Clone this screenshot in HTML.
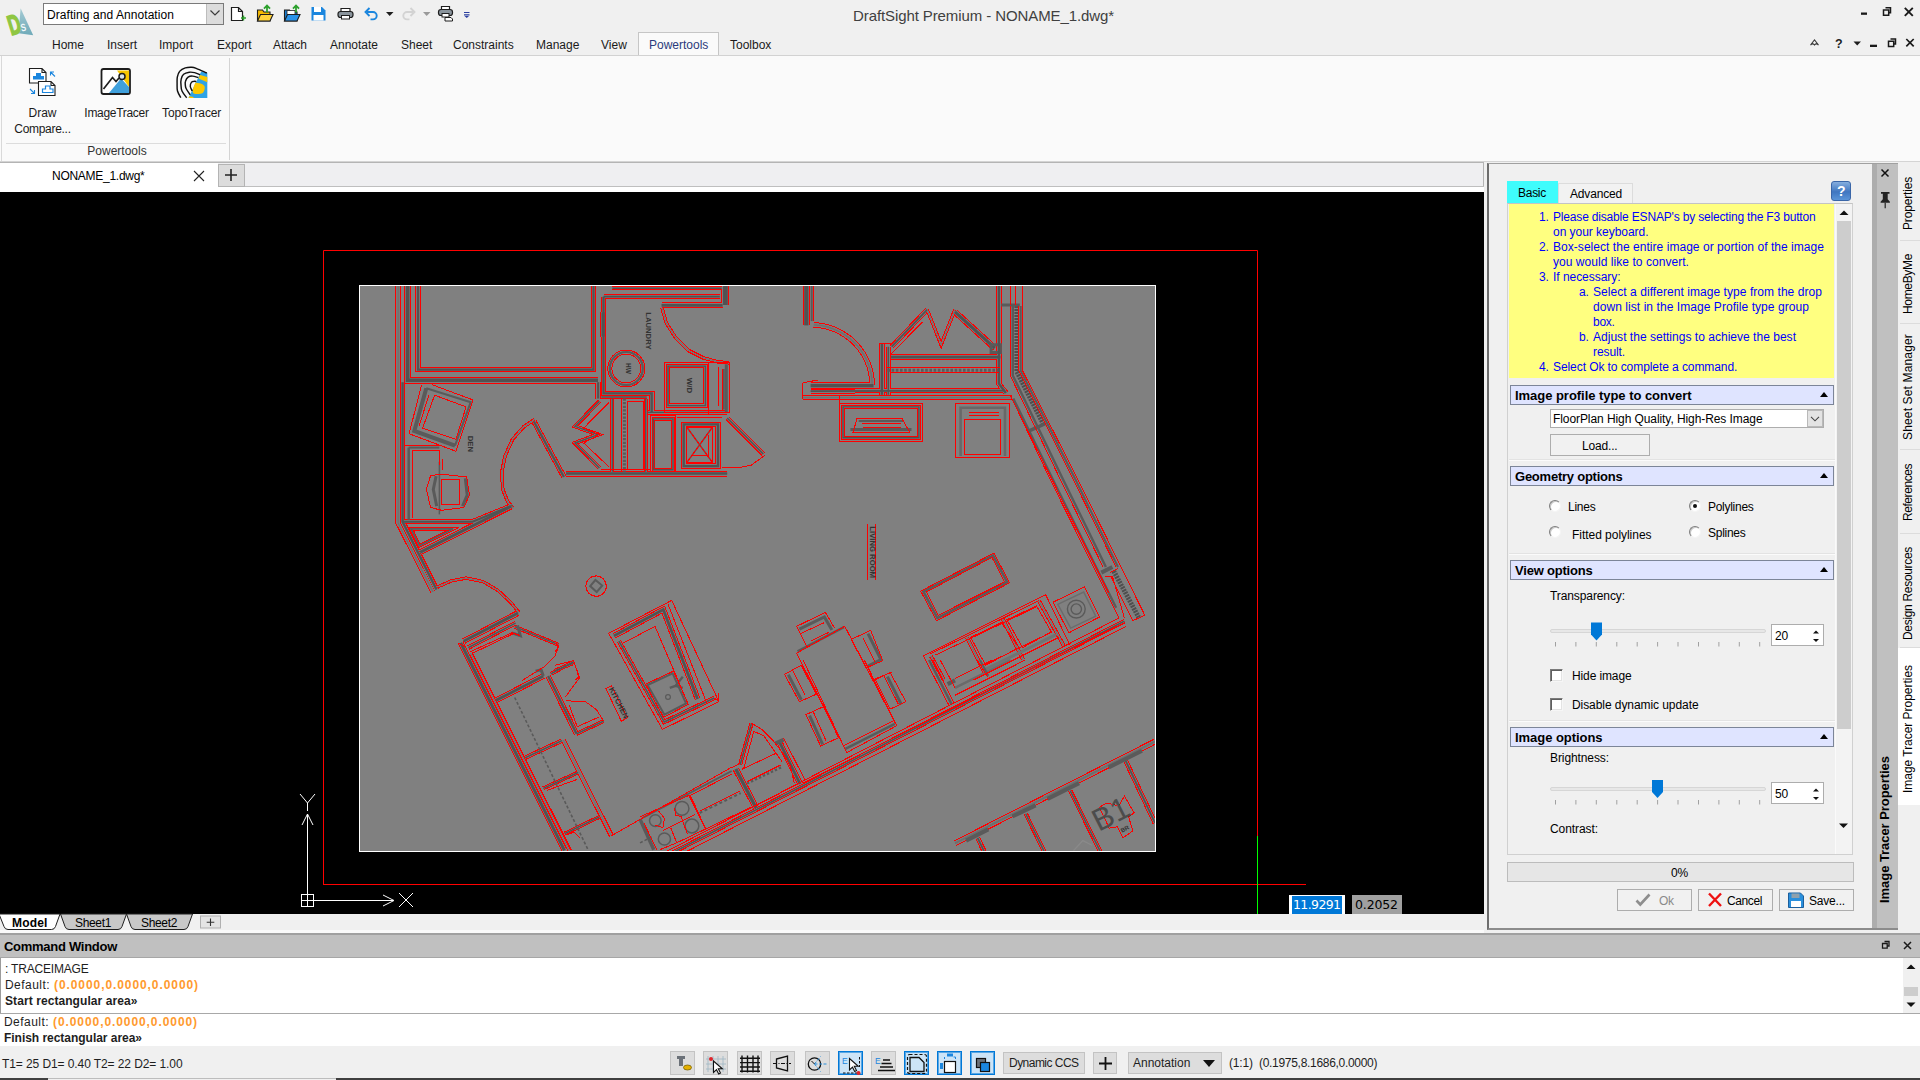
<!DOCTYPE html>
<html lang="en">
<head>
<meta charset="utf-8">
<title>DraftSight Premium - NONAME_1.dwg*</title>
<style>
*{box-sizing:border-box;margin:0;padding:0}
html,body{width:1920px;height:1080px;overflow:hidden;background:#f0f0f0}
body{position:relative;font-family:"Liberation Sans",sans-serif;font-size:12px;color:#000}
.a{position:absolute;white-space:nowrap}
.t{position:absolute;white-space:nowrap;line-height:14px;height:14px}
svg{position:absolute;overflow:visible}
/* ---------- title / quick access ---------- */
#wscombo{left:43px;top:3px;width:181px;height:22px;background:#fff;border:1px solid #7a7a7a}
#wscombo .btn{position:absolute;right:0;top:0;width:17px;height:20px;background:#dcdcdc;border-left:1px solid #bdbdbd}
#title{left:853px;top:7px;font-size:15px;line-height:18px;color:#404040}
.mtab{position:absolute;top:38px;height:14px;line-height:14px;font-size:12px;color:#1a1a1a;white-space:nowrap}
#ptab{left:638px;top:32px;width:81px;height:25px;background:#fafafa;border:1px solid #c6c6c6;border-bottom:none}
/* ---------- ribbon ---------- */
#ribbon{left:0;top:55px;width:1920px;height:107px;background:#fafafa;border-top:1px solid #d2d2d2;border-bottom:1px solid #d4d4d4}
#ribbon .lb{position:absolute;left:1px;top:0;width:1px;height:105px;background:#d9d9d9}
.rlab{position:absolute;font-size:12px;line-height:16px;text-align:center;color:#1a1a1a;white-space:nowrap}
/* ---------- doc tabs ---------- */
#doctabs{left:0;top:162px;width:1484px;height:30px;background:#efeff1;border-top:1px solid #b4b4b4;border-right:1px solid #b4b4b4}
#doctabs .line{position:absolute;left:0;top:23px;width:1484px;height:1px;background:#bfbfbf}
#doctabs .white{position:absolute;left:0;top:24px;width:1484px;height:5px;background:#fff}
#doctab{position:absolute;left:0;top:0;width:218px;height:29px;background:#fff}
#plusbtn{position:absolute;left:218px;top:1px;width:27px;height:23px;background:#dcdcdc;border:1px solid #b4b4b4}
/* ---------- canvas ---------- */
#canvas{left:0;top:192px;width:1484px;height:722px;background:#000;overflow:hidden}
/* ---------- model tabs ---------- */
#mtabs{left:0;top:914px;width:1484px;height:19px;background:#f0f0f0}
/* ---------- command window ---------- */
#cmdhead{left:0;top:933px;width:1920px;height:25px;background:#c0c0c0;border-top:2px solid #a0a0a0;border-bottom:1px solid #a6a6a6}
#cmdlog{left:0;top:958px;width:1920px;height:55px;background:#fff;border-left:1px solid #9b9b9b}
#cmdsep{left:0;top:1013px;width:1920px;height:1px;background:#a8a8a8}
#cmdin{left:0;top:1014px;width:1920px;height:32px;background:#fff}
.cl{position:absolute;left:5px;font-size:12px;line-height:16px;white-space:nowrap;color:#1e1e1e}
.or{color:#ff9a2e;font-weight:bold}
/* ---------- status bar ---------- */
#status{left:0;top:1046px;width:1920px;height:32px;background:#f0f0f0}
.sb{position:absolute;top:5px;width:25px;height:24px;background:#dddddd;border:1px solid #c3c3c3}
.sb.on{background:#cce4f7;border:1px solid #0078d7;box-shadow:inset 0 0 0 1px #5aa7e4}
/* ---------- right dock ---------- */
#dock{left:1487px;top:163px;width:411px;height:767px;background:#f0f0f0;border-left:2px solid #6d6d6d;border-top:1px solid #a0a0a0;border-bottom:2px solid #8c8c8c}
#docktitle{left:1872px;top:164px;width:26px;height:764px;background:#c0c0c0;border-left:5px solid #adadad}
#sidetabs{left:1898px;top:163px;width:22px;height:770px;background:#f0f0f0}
.vt{position:absolute;transform-origin:0 0;transform:rotate(-90deg);white-space:nowrap;font-size:12px;line-height:14px;height:14px}
.hd{position:absolute;left:1510px;width:324px;height:20px;background:#dfe4ff;border:1px solid #7c8598}
.hd b{position:absolute;left:4px;top:2px;font-size:13px;line-height:15px;letter-spacing:-0.05px;white-space:nowrap}
.hd i{position:absolute;right:5.5px;top:6px;width:0;height:0;border-left:4.5px solid transparent;border-right:4.5px solid transparent;border-bottom:5px solid #000}
.sep{position:absolute;left:1509px;width:326px;height:1px;background:#fbfbfb;border-top:1px solid #e3e3e3;height:2px}
.pt{position:absolute;font-size:12px;line-height:14px;height:14px;white-space:nowrap;letter-spacing:-0.19px;color:#000}
.bl{color:#0000ff}
.radio{position:absolute;width:12px;height:12px;border-radius:50%;background:#fff;border:1.5px solid;border-color:#7d7d7d #f4f4f4 #f4f4f4 #7d7d7d;box-shadow:inset 1px 1px 0 #c9c9c9}
.chk{position:absolute;width:13px;height:13px;background:#fff;border:1px solid;border-color:#7a7a7a #f6f6f6 #f6f6f6 #7a7a7a;box-shadow:inset 1px 1px 0 #5f5f5f,inset -1px -1px 0 #e3e3e3}
.groove{position:absolute;height:4px;background:#e7e7e7;border:1px solid #d6d6d6;border-radius:2px}
.spin{position:absolute;width:53px;height:22px;background:#fff;border:1px solid #adadad}
.pbtn{position:absolute;width:75px;height:22px;background:#f1f1f1;border:1px solid #adadad}
</style>
</head>
<body>

<!-- ================= TITLE BAR ================= -->
<!-- logo -->
<svg class="a" style="left:0;top:0" width="44" height="44" viewBox="0 0 44 44">
  <defs><linearGradient id="lg1" x1="0" y1="0" x2="0" y2="1"><stop offset="0" stop-color="#a5cbd4"/><stop offset="1" stop-color="#6faab9"/></linearGradient></defs>
  <polygon points="20.6,8.3 33.2,35.2 18.6,33.2" fill="url(#lg1)"/>
  <text transform="translate(11.2,35.4) rotate(-17) scale(.6,1)" font-family="Liberation Sans, sans-serif" font-weight="bold" font-size="28" fill="#8fc642" stroke="#8fc642" stroke-width="1.6">D</text>
  <text transform="translate(21.6,31.6) rotate(-12) scale(.75,1)" font-family="Liberation Sans, sans-serif" font-weight="bold" font-size="10.5" fill="#f4fafb">S</text>
</svg>
<!-- workspace combo -->
<div id="wscombo" class="a"><span class="t" style="left:3px;top:4px;font-size:12px;letter-spacing:0.068px">Drafting and Annotation</span><div class="btn"><svg style="left:2px;top:5px" width="12" height="8" viewBox="0 0 12 8"><path d="M1.5 1.5 L6 6 L10.5 1.5" fill="none" stroke="#3c3c3c" stroke-width="1.2"/></svg></div></div>
<!-- quick access icons -->
<svg class="a" style="left:226px;top:0" width="250" height="28" viewBox="226 0 250 28">
  <!-- new -->
  <path d="M231.5 7.5 h7 l4 4 v9 h-11 z M238.5 7.5 v4 h4" fill="#fff" stroke="#1e1e1e" stroke-width="1.2"/>
  <path d="M243.5 15.5 v5 M241 18 h5" stroke="#2ca02c" stroke-width="1.4"/>
  <!-- open yellow -->
  <path d="M257.5 21 v-11 h5 l1.5 2 h6 v9 z" fill="#f6b900" stroke="#1e1e1e" stroke-width="1.1"/>
  <path d="M257.5 21 l3 -6.5 h12.5 l-3 6.5 z" fill="#ffd23a" stroke="#1e1e1e" stroke-width="1.1"/>
  <path d="M267 12.5 v-6 M264 8.7 l3 -3.2 l3 3.2" fill="none" stroke="#2ca02c" stroke-width="1.8"/>
  <!-- open blue -->
  <path d="M284.5 21 v-11 h5 l1.5 2 h6 v9 z" fill="#1a7fd4" stroke="#1e1e1e" stroke-width="1.1"/>
  <path d="M287 10.5 h8 v4 h-8z" fill="#fff" stroke="#1e1e1e" stroke-width=".8"/>
  <path d="M284.5 21 l3 -6.5 h12.5 l-3 6.5 z" fill="#2a93e8" stroke="#1e1e1e" stroke-width="1.1"/>
  <path d="M296 12.5 v-6 M293 8.7 l3 -3.2 l3 3.2" fill="none" stroke="#2ca02c" stroke-width="1.8"/>
  <!-- save -->
  <path d="M311.5 7 h10.5 l3.5 3.5 v10 h-14 z" fill="#1b86de"/>
  <rect x="314" y="7" width="7" height="5" fill="#fff"/>
  <rect x="313.5" y="15" width="10" height="5.5" fill="#fff"/>
  <!-- print -->
  <path d="M341 12 v-3.5 h9 v3.5" fill="#fff" stroke="#1e1e1e" stroke-width="1.2"/>
  <rect x="338" y="11.5" width="15" height="6" rx="2.5" fill="#8a949c" stroke="#1e1e1e" stroke-width="1.2"/>
  <rect x="341.5" y="15.5" width="8" height="3.5" fill="#fff" stroke="#1e1e1e" stroke-width="1"/>
  <!-- undo -->
  <path d="M367 12 h6 a3.7 3.7 0 0 1 0 7.4 h-2.5" fill="none" stroke="#1b86de" stroke-width="1.9"/>
  <path d="M369.5 8 l-4 4 l4 4" fill="none" stroke="#1b86de" stroke-width="1.9"/>
  <polygon points="386,12 393.5,12 389.7,16" fill="#1e1e1e"/>
  <!-- redo (disabled) -->
  <path d="M413 12 h-6 a3.7 3.7 0 0 0 0 7.4 h2.5" fill="none" stroke="#d3d3d3" stroke-width="1.9"/>
  <path d="M410.500 8 l4 4 l-4 4" fill="none" stroke="#d3d3d3" stroke-width="1.9"/>
  <polygon points="423,12 430.500,12 426.700,16" fill="#9a9a9a"/>
  <!-- print preview -->
  <path d="M441.500 10 v-3.500 h8 v3.500" fill="#fff" stroke="#1e1e1e" stroke-width="1.2"/>
  <rect x="438.500" y="9.500" width="14" height="6" rx="2.500" fill="#8a949c" stroke="#1e1e1e" stroke-width="1.2"/>
  <rect x="442" y="13.500" width="7" height="3.500" fill="#fff" stroke="#1e1e1e" stroke-width="1"/>
  <path d="M445 17.500 h6 l1.500 1.500 v2 h-7.500 z" fill="#fff" stroke="#1e1e1e" stroke-width="1"/>
  <!-- customize -->
  <path d="M464 12.500 h5.500 M464 14.800 h5.500" stroke="#2b3fa0" stroke-width="1.2"/>
  <polygon points="464.500,16 469,16 466.750,18" fill="#2b3fa0"/>
</svg>
<div id="title" class="a" style="letter-spacing:-0.096px">DraftSight Premium - NONAME_1.dwg*</div>
<!-- window controls -->
<svg class="a" style="left:1800px;top:0" width="120" height="56" viewBox="1800 0 120 56">
  <rect x="1861" y="12.500" width="6" height="2.300" fill="#1a1a1a"/>
  <path d="M1885.500 7.800 h5 v5 h-1.500 M1883.500 10 h5.200 v5.200 h-5.200 z" fill="none" stroke="#1a1a1a" stroke-width="1.500"/>
  <path d="M1904.800 7.800 l8 8 M1912.800 7.800 l-8 8" stroke="#1a1a1a" stroke-width="1.900"/>
  <!-- row 2 -->
  <path d="M1810.500 45 l4 -5 l4 5 q-2.300 -2.300 -4 0 q-1.700 -2.300 -4 0 z" fill="none" stroke="#3c3c3c" stroke-width="1.100"/>
  <text x="1835" y="47.500" font-family="Liberation Sans, sans-serif" font-weight="bold" font-size="12.500" fill="#1e1e1e">?</text>
  <polygon points="1853.500,41.500 1861,41.500 1857.200,45.500" fill="#1e1e1e"/>
  <rect x="1870" y="44.700" width="7" height="2.300" fill="#1a1a1a"/>
  <path d="M1890.500 39 h5 v5 h-1.500 M1888.500 41.200 h5.200 v5.200 h-5.200 z" fill="none" stroke="#1a1a1a" stroke-width="1.500"/>
  <path d="M1906.300 39 l7.400 7.400 M1913.700 39 l-7.400 7.400" stroke="#1a1a1a" stroke-width="1.700"/>
</svg>
<!-- menu tabs -->
<div id="ptab" class="a"></div>
<span class="mtab" style="left:52px">Home</span>
<span class="mtab" style="left:107px">Insert</span>
<span class="mtab" style="left:159px">Import</span>
<span class="mtab" style="left:217px">Export</span>
<span class="mtab" style="left:273px">Attach</span>
<span class="mtab" style="left:330px">Annotate</span>
<span class="mtab" style="left:401px">Sheet</span>
<span class="mtab" style="left:453px">Constraints</span>
<span class="mtab" style="left:536px">Manage</span>
<span class="mtab" style="left:601px">View</span>
<span class="mtab" style="left:649px;color:#2b3a7c">Powertools</span>
<span class="mtab" style="left:730px">Toolbox</span>


<!-- ================= RIBBON ================= -->
<div id="ribbon" class="a"><div class="lb"></div>
  <div class="a" style="left:229px;top:2px;width:1px;height:102px;background:#d4d4d4"></div>
  <div class="a" style="left:6px;top:87px;width:220px;height:1px;background:#dcdcdc"></div>
  <span class="rlab" style="left:13px;top:49px;width:59px">Draw<br><span style="letter-spacing:-.3px">Compare...</span></span>
  <span class="rlab" style="left:84px;top:49px;width:65px;letter-spacing:-.3px">ImageTracer</span>
  <span class="rlab" style="left:162px;top:49px;width:58px;letter-spacing:-.1px">TopoTracer</span>
  <span class="rlab" style="left:80px;top:87px;width:74px;color:#333">Powertools</span>
  <!-- Draw compare icon -->
  <svg style="left:26px;top:10px" width="34" height="32" viewBox="26 66 34 32">
    <path d="M29.500 68.500 h12.500 l4 4 v10.500 h-16.500 z M42 68.500 v4 h4" fill="#fff" stroke="#1e1e1e" stroke-width="1.100"/>
    <path d="M33 79.500 v-3.500 h3 v-3 h5 v3 h3 v3.500 z" fill="#1b86de"/>
    <path d="M38.500 81.500 h12.500 l4 4 v10 h-16.500 z M51 81.500 v4 h4" fill="#fff" stroke="#1e1e1e" stroke-width="1.100"/>
    <path d="M42.500 92.500 v-3.500 h3 v-3 h4.500 v3 h3 v3.500 z" fill="none" stroke="#1b86de" stroke-width="1.200"/>
    <path d="M50.500 72 l4.500 4.500 M50.500 75.500 v-3.500 h3.500" fill="none" stroke="#1b86de" stroke-width="1.100"/>
    <path d="M30 89 l4.500 4.500 M34.500 90 v3.500 h-3.500" fill="none" stroke="#1b86de" stroke-width="1.100"/>
  </svg>
  <!-- ImageTracer icon -->
  <svg style="left:99px;top:10px" width="34" height="30" viewBox="99 66 34 30">
    <rect x="101.500" y="69" width="28.500" height="25" rx="2" fill="#fff" stroke="#1e1e1e" stroke-width="1.800"/>
    <polygon points="117,70.500 129,70.500 129,87" fill="#f7c600"/>
    <polygon points="109,93 121,78.500 129,87 129,93" fill="#3fa0dc"/>
    <path d="M103.500 89 l9 -11.500 l3.500 4 l3 -3.500" fill="none" stroke="#1e1e1e" stroke-width="1.700"/>
    <circle cx="122" cy="76.500" r="3" fill="#d8e4ec" stroke="#1e1e1e" stroke-width="1.500"/>
  </svg>
  <!-- TopoTracer icon -->
  <svg style="left:175px;top:10px" width="34" height="34" viewBox="175 66 34 34">
    <polygon points="201.1,71.8 207.3,72.7 207.3,97.9 188.5,97.9" fill="#2ea3e6"/>
    <polygon points="200.1,75.1 207.3,77.1 207.3,82.2 198.5,78.5" fill="#fcc800"/>
    <polygon points="189.4,96.3 192.6,96.7 194.0,97.9 188.5,97.9" fill="#fcc800"/>
    <path d="M195.4 82.8 C196.3 82.9 199.2 83.1 200.7 83.6 C202.2 84.2 203.8 85.1 204.4 86.1 C205.0 87.0 204.8 88.2 204.6 89.3 C204.4 90.4 203.8 91.8 203.2 92.6 C202.5 93.3 202.2 93.6 200.7 93.8 C199.3 94.0 196.0 94.2 194.6 93.8 C193.3 93.4 192.7 92.6 192.6 91.4 C192.5 90.1 193.3 87.9 193.8 86.5 C194.3 85.1 195.2 83.4 195.4 82.8 Z" fill="#fcc800"/>
    <g fill="none" stroke="#111" stroke-width="1.45">
    <path d="M180.8 97.7 C180.2 96.6 178.1 93.2 177.5 91.0 C176.9 88.7 177.1 86.3 177.1 84.0 C177.1 81.7 176.9 79.2 177.3 77.1 C177.7 75.0 178.2 72.9 179.6 71.4 C180.9 69.9 183.2 68.6 185.3 67.9 C187.3 67.3 189.9 67.2 191.8 67.3 C193.7 67.4 194.1 67.6 196.7 68.6 C199.2 69.5 205.1 72.3 206.8 73.0"/><path d="M186.7 97.7 C185.9 96.6 182.9 93.1 182.0 91.0 C181.0 88.8 181.1 86.8 181.0 84.8 C180.8 82.9 180.7 80.9 181.2 79.1 C181.6 77.4 182.3 75.4 183.6 74.3 C185.0 73.1 187.5 72.5 189.3 72.2 C191.2 71.9 192.8 72.2 194.6 72.6 C196.4 73.0 199.2 74.3 200.1 74.7"/><path d="M190.1 94.8 C189.5 93.8 186.9 90.2 186.1 88.5 C185.3 86.8 185.4 86.1 185.3 84.8 C185.2 83.6 185.0 82.5 185.5 81.2 C185.9 79.9 186.9 78.0 188.1 77.1 C189.3 76.3 190.9 76.0 192.6 76.1 C194.3 76.2 197.3 77.3 198.3 77.5"/><path d="M192.2 91.0 C191.9 90.2 190.5 87.9 190.3 86.5 C190.2 85.1 190.7 83.3 191.4 82.4 C192.0 81.5 193.4 81.3 194.2 81.2 C195.0 81.0 195.9 81.5 196.3 81.6"/></g>
  </svg>
</div>


<!-- ================= DOC TABS ================= -->
<div id="doctabs" class="a">
  <div class="line"></div><div class="white"></div>
  <div id="doctab"><span class="t" style="left:52px;top:6px;letter-spacing:-0.273px">NONAME_1.dwg*</span>
    <svg style="left:193px;top:6.500px" width="12" height="12" viewBox="0 0 12 12"><path d="M1 1 L11 11 M11 1 L1 11" stroke="#222" stroke-width="1.100"/></svg>
  </div>
  <div id="plusbtn"><svg style="left:5px;top:3px" width="14" height="14" viewBox="0 0 14 14"><path d="M7 1 V13 M1 7 H13" stroke="#222" stroke-width="1.600"/></svg></div>
</div>


<!-- ================= CANVAS ================= -->
<div id="canvas" class="a">
<svg style="left:0;top:0" width="1484" height="722" viewBox="0 192 1484 722">
<defs><clipPath id="imgclip"><rect x="360" y="286" width="795" height="565"/></clipPath></defs>
<rect x="359.5" y="285.5" width="796" height="566" fill="#808080" stroke="#fff" stroke-width="1"/>
<g clip-path="url(#imgclip)" fill="none" stroke-linejoin="miter" stroke-linecap="butt">
<g shape-rendering="crispEdges"><path d="M398.1 283.7 L398.1 523.0 L433.0 591.9" stroke="#ff0000" stroke-width="5.3"/><path d="M402.6 382.2 L402.6 521.7 L436.5 589.6" stroke="#ff0000" stroke-width="5.6"/><path d="M407.6 283.7 L407.6 380.2 L598.0 380.2" stroke="#ff0000" stroke-width="6.9"/><path d="M418.0 283.7 L418.0 369.6 L593.5 369.6 L593.5 283.7" stroke="#ff0000" stroke-width="5.5"/><path d="M402.6 521.7 L472.6 521.7 L512.4 505.4" stroke="#ff0000" stroke-width="5.4"/><path d="M420.2 552.2 L512.0 505.9" stroke="#ff0000" stroke-width="6.0"/><path d="M534.7 419.4 L523.6 426.9 L512.5 439.4 L505.0 456.1 L501.7 472.8 L502.8 489.4 L507.8 501.9 L513.3 508.3" stroke="#ff0000" stroke-width="3.6"/><path d="M533.9 421.4 L563.9 476.9" stroke="#ff0000" stroke-width="5.5"/><path d="M598.1 382.2 L598.1 398.5" stroke="#ff0000" stroke-width="5.3"/><path d="M599.4 401.3 L575.0 426.3 L598.0 434.6 L575.0 443.0 L599.4 468.0" stroke="#ff0000" stroke-width="4.3"/><path d="M603.5 296.7 L603.5 393.3 L651.7 393.3 L651.7 412.4" stroke="#ff0000" stroke-width="5.6"/><path d="M603.5 296.7 L719.8 296.7" stroke="#ff0000" stroke-width="5.0"/><path d="M612.4 288.3 L721.7 288.3" stroke="#ff0000" stroke-width="4.0"/><path d="M725.4 284.6 L725.4 305.0" stroke="#ff0000" stroke-width="8.0"/><path d="M661.5 305.4 L722.6 305.4" stroke="#ff0000" stroke-width="6.0"/><path d="M662.0 307.8 L666.1 322.6 L675.4 337.4 L688.3 350.4 L703.1 357.8 L718.0 361.9 L729.1 362.8" stroke="#ff0000" stroke-width="3.6"/><path d="M603.1 312.4 L603.1 336.5" stroke="#ff0000" stroke-width="6.5"/><path d="M668.0 366.1 L705.4 366.1 L705.4 405.6 L668.0 405.6 Z" stroke="#ff0000" stroke-width="4.3"/><path d="M723.9 368.9 L723.9 409.6" stroke="#ff0000" stroke-width="4.0"/><path d="M601.3 397.0 L646.7 397.0" stroke="#ff0000" stroke-width="4.0"/><path d="M612.4 398.5 L612.4 471.7" stroke="#ff0000" stroke-width="4.0"/><path d="M645.7 398.5 L645.7 471.7" stroke="#ff0000" stroke-width="4.0"/><path d="M653.5 418.9 L673.0 418.9 L673.0 469.8 L653.5 469.8 Z" stroke="#ff0000" stroke-width="3.4"/><path d="M683.7 424.4 L718.0 424.4 L718.0 466.1 L683.7 466.1 Z" stroke="#ff0000" stroke-width="5.6"/><path d="M647.6 412.4 L727.2 412.4" stroke="#ff0000" stroke-width="4.5"/><path d="M727.2 418.0 L763.3 454.1" stroke="#ff0000" stroke-width="4.6"/><path d="M566.1 473.5 L727.2 473.5" stroke="#ff0000" stroke-width="6.0"/><path d="M806.3 284.6 L806.3 325.4" stroke="#ff0000" stroke-width="7.5"/><path d="M813.6 324.9 L820.2 325.4 L826.8 326.8 L833.1 328.8 L839.2 331.5 L844.9 334.9 L850.3 338.8 L855.2 343.4 L859.5 348.4 L863.3 353.9 L866.5 359.7 L869.0 365.9 L870.8 372.3 L871.9 378.9 L872.2 385.6" stroke="#ff0000" stroke-width="5.6"/><path d="M810.6 385.6 L873.5 385.6" stroke="#ff0000" stroke-width="6.5"/><path d="M810.6 391.1 L1005.0 390.7" stroke="#ff0000" stroke-width="5.0"/><path d="M802.8 397.6 L1011.5 397.6" stroke="#ff0000" stroke-width="4.7"/><path d="M881.9 343.9 L881.9 394.8" stroke="#ff0000" stroke-width="5.6"/><path d="M888.3 346.7 L888.3 394.8" stroke="#ff0000" stroke-width="4.4"/><path d="M891.7 346.7 L927.2 309.6" stroke="#ff0000" stroke-width="5.0"/><path d="M927.2 309.6 L941.1 344.8 L955.0 309.6" stroke="#ff0000" stroke-width="3.6"/><path d="M955.0 311.9 L994.8 348.1" stroke="#ff0000" stroke-width="6.3"/><path d="M891.1 357.2 L1000.4 357.2" stroke="#ff0000" stroke-width="6.0"/><path d="M843.0 406.9 L918.9 406.9 L918.9 437.8 L843.0 437.8 Z" stroke="#ff0000" stroke-width="4.3"/><path d="M998.9 284.6 L998.9 383.7 L1005.9 393.0" stroke="#ff0000" stroke-width="5.6"/><path d="M518.0 613.0 L463.7 641.1" stroke="#ff0000" stroke-width="6.0"/><path d="M515.7 623.0 L468.3 647.6" stroke="#ff0000" stroke-width="4.6"/><path d="M437.4 587.0 L451.3 580.9 L466.1 578.1 L482.8 581.5 L497.6 590.2 L510.6 602.2 L518.9 612.4" stroke="#ff0000" stroke-width="3.4"/><path d="M613.9 635.9 L663.3 609.6 L697.6 698.9" stroke="#ff0000" stroke-width="6.0"/><path d="M618.9 641.1 L664.3 722.0 L714.3 698.0" stroke="#ff0000" stroke-width="4.6"/><path d="M555.0 670.7 L572.6 663.3" stroke="#ff0000" stroke-width="4.0"/><path d="M930.9 655.9 L943.9 680.0" stroke="#ff0000" stroke-width="4.0"/><path d="M967.0 637.4 L984.6 672.6" stroke="#ff0000" stroke-width="4.0"/><path d="M1002.8 618.9 L1023.1 659.6" stroke="#ff0000" stroke-width="4.0"/><path d="M1038.7 600.4 L1064.3 646.7" stroke="#ff0000" stroke-width="4.0"/><path d="M1124.4 621.1 L669.8 854.1" stroke="#ff0000" stroke-width="4.4"/><path d="M460.7 642.8 L564.4 850.3" stroke="#ff0000" stroke-width="6.2"/><path d="M470.6 653.1 L569.2 850.3" stroke="#ff0000" stroke-width="4.1"/><path d="M514.7 626.7 L558.3 644.7" stroke="#ff0000" stroke-width="4.0"/><path d="M496.1 700.3 L543.3 676.1" stroke="#ff0000" stroke-width="6.0"/><path d="M548.1 676.1 L576.4 733.6" stroke="#ff0000" stroke-width="5.5"/><path d="M550.8 673.9 L573.9 661.7" stroke="#ff0000" stroke-width="4.0"/><path d="M576.4 733.9 L603.6 721.1" stroke="#ff0000" stroke-width="4.0"/><path d="M525.0 757.8 L561.9 740.6" stroke="#ff0000" stroke-width="4.5"/><path d="M563.3 740.0 L611.4 835.8" stroke="#ff0000" stroke-width="5.0"/><path d="M543.3 788.3 L578.1 772.5" stroke="#ff0000" stroke-width="4.0"/><path d="M564.7 833.6 L599.4 816.9" stroke="#ff0000" stroke-width="4.0"/><path d="M735.8 769.1 L756.1 808.0" stroke="#ff0000" stroke-width="6.5"/><path d="M740.1 764.9 L751.5 723.3" stroke="#ff0000" stroke-width="4.2"/><path d="M779.8 742.7 L800.1 784.0" stroke="#ff0000" stroke-width="6.0"/><path d="M955.0 843.3 L1155.0 741.5" stroke="#ff0000" stroke-width="6.0"/><path d="M977.6 837.8 L984.3 851.7" stroke="#ff0000" stroke-width="5.0"/><path d="M1025.7 813.7 L1044.3 851.7" stroke="#ff0000" stroke-width="4.4"/><path d="M1070.2 790.6 L1100.4 851.7" stroke="#ff0000" stroke-width="4.4"/><path d="M1125.7 760.9 L1155.0 823.0" stroke="#ff0000" stroke-width="5.0"/></g>
<g shape-rendering="crispEdges"><path d="M398.1 283.7 L398.1 523.0 L433.0 591.9" stroke="#7b7b7b" stroke-width="3.3"/><path d="M402.6 382.2 L402.6 521.7 L436.5 589.6" stroke="#7b7b7b" stroke-width="3.6"/><path d="M407.6 283.7 L407.6 380.2 L598.0 380.2" stroke="#7b7b7b" stroke-width="4.9"/><path d="M418.0 283.7 L418.0 369.6 L593.5 369.6 L593.5 283.7" stroke="#7b7b7b" stroke-width="3.5"/><path d="M402.6 521.7 L472.6 521.7 L512.4 505.4" stroke="#7b7b7b" stroke-width="3.4"/><path d="M420.2 552.2 L512.0 505.9" stroke="#7b7b7b" stroke-width="4.0"/><path d="M534.7 419.4 L523.6 426.9 L512.5 439.4 L505.0 456.1 L501.7 472.8 L502.8 489.4 L507.8 501.9 L513.3 508.3" stroke="#7b7b7b" stroke-width="1.6"/><path d="M533.9 421.4 L563.9 476.9" stroke="#7b7b7b" stroke-width="3.5"/><path d="M598.1 382.2 L598.1 398.5" stroke="#7b7b7b" stroke-width="3.3"/><path d="M599.4 401.3 L575.0 426.3 L598.0 434.6 L575.0 443.0 L599.4 468.0" stroke="#7b7b7b" stroke-width="2.3"/><path d="M603.5 296.7 L603.5 393.3 L651.7 393.3 L651.7 412.4" stroke="#7b7b7b" stroke-width="3.6"/><path d="M603.5 296.7 L719.8 296.7" stroke="#7b7b7b" stroke-width="3.0"/><path d="M612.4 288.3 L721.7 288.3" stroke="#7b7b7b" stroke-width="2.0"/><path d="M725.4 284.6 L725.4 305.0" stroke="#7b7b7b" stroke-width="6.0"/><path d="M661.5 305.4 L722.6 305.4" stroke="#7b7b7b" stroke-width="4.0"/><path d="M662.0 307.8 L666.1 322.6 L675.4 337.4 L688.3 350.4 L703.1 357.8 L718.0 361.9 L729.1 362.8" stroke="#7b7b7b" stroke-width="1.6"/><path d="M603.1 312.4 L603.1 336.5" stroke="#7b7b7b" stroke-width="4.5"/><path d="M668.0 366.1 L705.4 366.1 L705.4 405.6 L668.0 405.6 Z" stroke="#7b7b7b" stroke-width="2.3"/><path d="M723.9 368.9 L723.9 409.6" stroke="#7b7b7b" stroke-width="2.0"/><path d="M601.3 397.0 L646.7 397.0" stroke="#7b7b7b" stroke-width="2.0"/><path d="M612.4 398.5 L612.4 471.7" stroke="#7b7b7b" stroke-width="2.0"/><path d="M645.7 398.5 L645.7 471.7" stroke="#7b7b7b" stroke-width="2.0"/><path d="M653.5 418.9 L673.0 418.9 L673.0 469.8 L653.5 469.8 Z" stroke="#7b7b7b" stroke-width="1.4"/><path d="M683.7 424.4 L718.0 424.4 L718.0 466.1 L683.7 466.1 Z" stroke="#7b7b7b" stroke-width="3.6"/><path d="M647.6 412.4 L727.2 412.4" stroke="#7b7b7b" stroke-width="2.5"/><path d="M727.2 418.0 L763.3 454.1" stroke="#7b7b7b" stroke-width="2.6"/><path d="M566.1 473.5 L727.2 473.5" stroke="#7b7b7b" stroke-width="4.0"/><path d="M806.3 284.6 L806.3 325.4" stroke="#7b7b7b" stroke-width="5.5"/><path d="M813.6 324.9 L820.2 325.4 L826.8 326.8 L833.1 328.8 L839.2 331.5 L844.9 334.9 L850.3 338.8 L855.2 343.4 L859.5 348.4 L863.3 353.9 L866.5 359.7 L869.0 365.9 L870.8 372.3 L871.9 378.9 L872.2 385.6" stroke="#7b7b7b" stroke-width="3.6"/><path d="M810.6 385.6 L873.5 385.6" stroke="#7b7b7b" stroke-width="4.5"/><path d="M810.6 391.1 L1005.0 390.7" stroke="#7b7b7b" stroke-width="3.0"/><path d="M802.8 397.6 L1011.5 397.6" stroke="#7b7b7b" stroke-width="2.7"/><path d="M881.9 343.9 L881.9 394.8" stroke="#7b7b7b" stroke-width="3.6"/><path d="M888.3 346.7 L888.3 394.8" stroke="#7b7b7b" stroke-width="2.4"/><path d="M891.7 346.7 L927.2 309.6" stroke="#7b7b7b" stroke-width="3.0"/><path d="M927.2 309.6 L941.1 344.8 L955.0 309.6" stroke="#7b7b7b" stroke-width="1.6"/><path d="M955.0 311.9 L994.8 348.1" stroke="#7b7b7b" stroke-width="4.3"/><path d="M891.1 357.2 L1000.4 357.2" stroke="#7b7b7b" stroke-width="4.0"/><path d="M843.0 406.9 L918.9 406.9 L918.9 437.8 L843.0 437.8 Z" stroke="#7b7b7b" stroke-width="2.3"/><path d="M998.9 284.6 L998.9 383.7 L1005.9 393.0" stroke="#7b7b7b" stroke-width="3.6"/><path d="M518.0 613.0 L463.7 641.1" stroke="#7b7b7b" stroke-width="4.0"/><path d="M515.7 623.0 L468.3 647.6" stroke="#7b7b7b" stroke-width="2.6"/><path d="M437.4 587.0 L451.3 580.9 L466.1 578.1 L482.8 581.5 L497.6 590.2 L510.6 602.2 L518.9 612.4" stroke="#7b7b7b" stroke-width="1.4"/><path d="M613.9 635.9 L663.3 609.6 L697.6 698.9" stroke="#7b7b7b" stroke-width="4.0"/><path d="M618.9 641.1 L664.3 722.0 L714.3 698.0" stroke="#7b7b7b" stroke-width="2.6"/><path d="M555.0 670.7 L572.6 663.3" stroke="#7b7b7b" stroke-width="2.0"/><path d="M930.9 655.9 L943.9 680.0" stroke="#7b7b7b" stroke-width="2.0"/><path d="M967.0 637.4 L984.6 672.6" stroke="#7b7b7b" stroke-width="2.0"/><path d="M1002.8 618.9 L1023.1 659.6" stroke="#7b7b7b" stroke-width="2.0"/><path d="M1038.7 600.4 L1064.3 646.7" stroke="#7b7b7b" stroke-width="2.0"/><path d="M1124.4 621.1 L669.8 854.1" stroke="#7b7b7b" stroke-width="2.4"/><path d="M460.7 642.8 L564.4 850.3" stroke="#7b7b7b" stroke-width="4.2"/><path d="M470.6 653.1 L569.2 850.3" stroke="#7b7b7b" stroke-width="2.1"/><path d="M514.7 626.7 L558.3 644.7" stroke="#7b7b7b" stroke-width="2.0"/><path d="M496.1 700.3 L543.3 676.1" stroke="#7b7b7b" stroke-width="4.0"/><path d="M548.1 676.1 L576.4 733.6" stroke="#7b7b7b" stroke-width="3.5"/><path d="M550.8 673.9 L573.9 661.7" stroke="#7b7b7b" stroke-width="2.0"/><path d="M576.4 733.9 L603.6 721.1" stroke="#7b7b7b" stroke-width="2.0"/><path d="M525.0 757.8 L561.9 740.6" stroke="#7b7b7b" stroke-width="2.5"/><path d="M563.3 740.0 L611.4 835.8" stroke="#7b7b7b" stroke-width="3.0"/><path d="M543.3 788.3 L578.1 772.5" stroke="#7b7b7b" stroke-width="2.0"/><path d="M564.7 833.6 L599.4 816.9" stroke="#7b7b7b" stroke-width="2.0"/><path d="M735.8 769.1 L756.1 808.0" stroke="#7b7b7b" stroke-width="4.5"/><path d="M740.1 764.9 L751.5 723.3" stroke="#7b7b7b" stroke-width="2.2"/><path d="M779.8 742.7 L800.1 784.0" stroke="#7b7b7b" stroke-width="4.0"/><path d="M955.0 843.3 L1155.0 741.5" stroke="#7b7b7b" stroke-width="4.0"/><path d="M977.6 837.8 L984.3 851.7" stroke="#7b7b7b" stroke-width="3.0"/><path d="M1025.7 813.7 L1044.3 851.7" stroke="#7b7b7b" stroke-width="2.4"/><path d="M1070.2 790.6 L1100.4 851.7" stroke="#7b7b7b" stroke-width="2.4"/><path d="M1125.7 760.9 L1155.0 823.0" stroke="#7b7b7b" stroke-width="3.0"/></g>
<g><path d="M398.1 283.7 L398.1 523.0 L433.0 591.9" stroke="#6e6e6e" stroke-width="1.1"/><path d="M402.6 382.2 L402.6 521.7 L436.5 589.6" stroke="#525252" stroke-width="2.3"/><path d="M407.6 283.7 L407.6 380.2 L598.0 380.2" stroke="#525252" stroke-width="3.6"/><path d="M418.0 283.7 L418.0 369.6 L593.5 369.6 L593.5 283.7" stroke="#525252" stroke-width="2.2"/><path d="M426.3 388.3 L414.3 430.9 L455.0 445.7" stroke="#5a5a5a" stroke-width="4"/><path d="M426.3 388.3 L470.7 402.2 L455.0 445.7" stroke="#5a5a5a" stroke-width="2"/><path d="M408.7 447.6 L408.7 519.8" stroke="#5a5a5a" stroke-width="2.5"/><path d="M408.7 447.6 L439.3 447.6" stroke="#5a5a5a" stroke-width="2"/><path d="M436.1 476.1 L433.3 489.4 L436.7 506.1" stroke="#5a5a5a" stroke-width="3"/><path d="M465.3 478.3 L467.2 495.0 L462.5 506.1" stroke="#5a5a5a" stroke-width="3"/><path d="M439.4 461.7 L439.4 514.4" stroke="#5a5a5a" stroke-width="1.5"/><path d="M402.6 521.7 L472.6 521.7 L512.4 505.4" stroke="#525252" stroke-width="2.1"/><path d="M420.2 552.2 L512.0 505.9" stroke="#525252" stroke-width="2.7"/><path d="M410.9 528.7 L453.1 528.7 L419.4 545.7 Z" stroke="#5a5a5a" stroke-width="2"/><path d="M534.7 419.4 L523.6 426.9 L512.5 439.4 L505.0 456.1 L501.7 472.8 L502.8 489.4 L507.8 501.9 L513.3 508.3" stroke="#6e6e6e" stroke-width="0.8"/><path d="M533.9 421.4 L563.9 476.9" stroke="#525252" stroke-width="2.2"/><path d="M598.1 382.2 L598.1 398.5" stroke="#525252" stroke-width="2.0"/><path d="M599.4 401.3 L575.0 426.3 L598.0 434.6 L575.0 443.0 L599.4 468.0" stroke="#525252" stroke-width="1.4"/><path d="M603.5 296.7 L603.5 393.3 L651.7 393.3 L651.7 412.4" stroke="#525252" stroke-width="2.3"/><path d="M603.5 296.7 L719.8 296.7" stroke="#525252" stroke-width="1.7"/><path d="M612.4 288.3 L721.7 288.3" stroke="#525252" stroke-width="1.4"/><path d="M725.4 284.6 L725.4 305.0" stroke="#525252" stroke-width="4.7"/><path d="M661.5 305.4 L722.6 305.4" stroke="#525252" stroke-width="2.7"/><path d="M662.0 307.8 L666.1 322.6 L675.4 337.4 L688.3 350.4 L703.1 357.8 L718.0 361.9 L729.1 362.8" stroke="#6e6e6e" stroke-width="0.8"/><path d="M603.1 312.4 L603.1 336.5" stroke="#525252" stroke-width="3.2"/><circle cx="626.3" cy="368.5" r="16.5" stroke="#5a5a5a" stroke-width="2.2"/><path d="M668.0 366.1 L705.4 366.1 L705.4 405.6 L668.0 405.6 Z" stroke="#525252" stroke-width="1.4"/><path d="M723.9 368.9 L723.9 409.6" stroke="#525252" stroke-width="1.4"/><path d="M726.3 364.3 L726.3 412.4" stroke="#5a5a5a" stroke-width="3"/><path d="M601.3 397.0 L646.7 397.0" stroke="#525252" stroke-width="1.4"/><path d="M612.4 398.5 L612.4 471.7" stroke="#525252" stroke-width="1.4"/><path d="M624.4 398.5 L624.4 471.7" stroke="#5a5a5a" stroke-width="3" stroke-dasharray="2.2 1.4"/><path d="M645.7 398.5 L645.7 471.7" stroke="#525252" stroke-width="1.4"/><path d="M653.5 418.9 L673.0 418.9 L673.0 469.8 L653.5 469.8 Z" stroke="#525252" stroke-width="1.4"/><path d="M683.7 424.4 L718.0 424.4 L718.0 466.1 L683.7 466.1 Z" stroke="#525252" stroke-width="2.3"/><path d="M686.9 427.2 L712.4 462.4" stroke="#5a5a5a" stroke-width="1.5"/><path d="M712.4 427.2 L686.9 462.4" stroke="#5a5a5a" stroke-width="1.5"/><path d="M647.6 412.4 L727.2 412.4" stroke="#525252" stroke-width="1.4"/><path d="M727.2 418.0 L763.3 454.1" stroke="#525252" stroke-width="1.4"/><path d="M566.1 473.5 L727.2 473.5" stroke="#525252" stroke-width="2.7"/><path d="M806.3 284.6 L806.3 325.4" stroke="#525252" stroke-width="4.2"/><path d="M811.7 285.9 L811.7 321.1" stroke="#5a5a5a" stroke-width="2"/><path d="M813.6 324.9 L820.2 325.4 L826.8 326.8 L833.1 328.8 L839.2 331.5 L844.9 334.9 L850.3 338.8 L855.2 343.4 L859.5 348.4 L863.3 353.9 L866.5 359.7 L869.0 365.9 L870.8 372.3 L871.9 378.9 L872.2 385.6" stroke="#6e6e6e" stroke-width="1.4"/><path d="M810.6 385.6 L873.5 385.6" stroke="#525252" stroke-width="3.2"/><path d="M810.6 391.1 L1005.0 390.7" stroke="#525252" stroke-width="1.7"/><path d="M802.8 397.6 L1011.5 397.6" stroke="#6e6e6e" stroke-width="0.8"/><path d="M881.9 343.9 L881.9 394.8" stroke="#525252" stroke-width="2.3"/><path d="M888.3 346.7 L888.3 394.8" stroke="#525252" stroke-width="1.4"/><path d="M891.7 346.7 L927.2 309.6" stroke="#525252" stroke-width="1.7"/><path d="M927.2 309.6 L941.1 344.8 L955.0 309.6" stroke="#6e6e6e" stroke-width="0.8"/><path d="M955.0 311.9 L994.8 348.1" stroke="#525252" stroke-width="3.0"/><path d="M991.1 344.8 L1000.4 344.8 L1000.4 352.6 L991.1 352.6 Z" stroke="#5a5a5a" stroke-width="3"/><path d="M891.1 357.2 L1000.4 357.2" stroke="#525252" stroke-width="2.7"/><path d="M887.4 370.2 L1000.4 370.2" stroke="#5a5a5a" stroke-width="3" stroke-dasharray="2.6 1.6"/><path d="M843.0 406.9 L918.9 406.9 L918.9 437.8 L843.0 437.8 Z" stroke="#525252" stroke-width="1.4"/><path d="M850.4 429.6 L911.5 429.6" stroke="#5a5a5a" stroke-width="3"/><path d="M858.7 421.1 L903.1 421.1" stroke="#5a5a5a" stroke-width="2"/><path d="M1016.7 305.9 L1016.7 371.7 L1043.9 425.4" stroke="#4e4e4e" stroke-width="4.6" stroke-dasharray="2 1"/><path d="M1012.8 305.9 L1012.8 375.4 L1063.3 480.0 L1105.9 567.0" stroke="#5a5a5a" stroke-width="2.4"/><path d="M1020.7 305.9 L1020.7 370.7 L1075.7 480.0 L1118.0 567.0" stroke="#5a5a5a" stroke-width="2"/><path d="M998.9 284.6 L998.9 383.7 L1005.9 393.0" stroke="#525252" stroke-width="2.3"/><path d="M1001.3 305.0 L1019.8 305.0" stroke="#5a5a5a" stroke-width="3"/><path d="M1013.3 398.5 L1053.1 480.0 L1116.1 607.8" stroke="#5a5a5a" stroke-width="2.4"/><path d="M1113.7 571.1 L1138.7 617.4" stroke="#4e4e4e" stroke-width="4.8" stroke-dasharray="2 1"/><path d="M1101.3 572.6 L1112.4 567.0" stroke="#5a5a5a" stroke-width="4"/><path d="M1029.1 430.9 L1045.7 423.5" stroke="#5a5a5a" stroke-width="3.5"/><path d="M960.6 455.9 L960.6 407.8 L1005.0 407.8 L1005.0 455.9" stroke="#686868" stroke-width="2.6"/><path d="M518.0 613.0 L463.7 641.1" stroke="#525252" stroke-width="2.7"/><path d="M515.7 623.0 L468.3 647.6" stroke="#525252" stroke-width="1.4"/><path d="M437.4 587.0 L451.3 580.9 L466.1 578.1 L482.8 581.5 L497.6 590.2 L510.6 602.2 L518.9 612.4" stroke="#6e6e6e" stroke-width="0.8"/><path d="M590.2 586.1 L595.4 580.0 L602.2 585.6 L596.7 592.0 Z" stroke="#5a5a5a" stroke-width="2"/><path d="M613.9 635.9 L663.3 609.6 L697.6 698.9" stroke="#525252" stroke-width="2.7"/><path d="M618.9 641.1 L664.3 722.0 L714.3 698.0" stroke="#525252" stroke-width="1.4"/><path d="M647.6 685.0 L672.6 673.3 L686.1 703.5 L664.3 714.6 Z" stroke="#5a5a5a" stroke-width="2"/><circle cx="668.0" cy="697.0" r="2.4" stroke="#5a5a5a" stroke-width="1.2"/><path d="M669.8 687.8 L675.4 685.9 L682.8 676.7" stroke="#5a5a5a" stroke-width="2.4"/><path d="M682.8 687.8 L675.4 685.9" stroke="#5a5a5a" stroke-width="2.4"/><path d="M555.0 670.7 L572.6 663.3" stroke="#525252" stroke-width="1.4"/><path d="M799.4 629.1 L824.4 617.0 L831.9 630.0" stroke="#5a5a5a" stroke-width="3"/><path d="M797.6 651.3 L843.9 627.2" stroke="#5a5a5a" stroke-width="2.5"/><path d="M868.0 633.7 L880.9 659.6 L868.0 666.1" stroke="#5a5a5a" stroke-width="3"/><path d="M923.5 591.7 L993.0 555.4 L1007.2 582.2 L937.4 618.0 Z" stroke="#5a5a5a" stroke-width="2.5"/><path d="M930.9 655.9 L943.9 680.0" stroke="#6e6e6e" stroke-width="0.8"/><path d="M967.0 637.4 L984.6 672.6" stroke="#6e6e6e" stroke-width="0.8"/><path d="M1002.8 618.9 L1023.1 659.6" stroke="#6e6e6e" stroke-width="0.8"/><path d="M1038.7 600.4 L1064.3 646.7" stroke="#6e6e6e" stroke-width="0.8"/><path d="M982.8 670.7 L1055.9 634.6" stroke="#727272" stroke-width="3"/><path d="M1057.8 604.4 L1083.7 592.0 L1095.7 616.1 L1070.7 628.1 Z" stroke="#6c6c6c" stroke-width="1.5"/><circle cx="1076.3" cy="609.1" r="8.9" stroke="#5a5a5a" stroke-width="1.4"/><circle cx="1076.3" cy="609.1" r="5.2" stroke="#5a5a5a" stroke-width="1.4"/><path d="M1124.4 621.1 L669.8 854.1" stroke="#525252" stroke-width="1.4"/><path d="M460.7 642.8 L564.4 850.3" stroke="#525252" stroke-width="2.9"/><path d="M470.6 653.1 L569.2 850.3" stroke="#6e6e6e" stroke-width="0.8"/><path d="M514.7 626.7 L558.3 644.7" stroke="#525252" stroke-width="1.4"/><path d="M511.9 632.8 L520.3 635.6 L517.5 625.3" stroke="#5a5a5a" stroke-width="3"/><path d="M496.1 700.3 L543.3 676.1" stroke="#525252" stroke-width="2.7"/><path d="M535.6 671.1 L541.1 669.7 L543.3 676.1" stroke="#5a5a5a" stroke-width="3"/><path d="M548.1 676.1 L576.4 733.6" stroke="#525252" stroke-width="2.2"/><path d="M550.8 673.9 L573.9 661.7" stroke="#525252" stroke-width="1.4"/><path d="M576.4 733.9 L603.6 721.1" stroke="#525252" stroke-width="1.4"/><path d="M525.0 757.8 L561.9 740.6" stroke="#525252" stroke-width="1.4"/><path d="M563.3 740.0 L611.4 835.8" stroke="#6e6e6e" stroke-width="0.8"/><path d="M543.3 788.3 L578.1 772.5" stroke="#525252" stroke-width="1.4"/><path d="M564.7 833.6 L599.4 816.9" stroke="#525252" stroke-width="1.4"/><path d="M514.7 697.5 L588.3 850.3" stroke="#5a5a5a" stroke-width="1.6" stroke-dasharray="3 2"/><path d="M643.1 817.6 L731.7 771.0" stroke="#5a5a5a" stroke-width="1.8"/><path d="M699.6 813.0 L740.8 793.1" stroke="#5a5a5a" stroke-width="2" stroke-dasharray="3 2.5"/><path d="M735.8 769.1 L756.1 808.0" stroke="#525252" stroke-width="3.2"/><path d="M740.1 764.9 L751.5 723.3" stroke="#525252" stroke-width="1.4"/><path d="M747.0 783.5 L782.1 766.9" stroke="#5a5a5a" stroke-width="2.4" stroke-dasharray="2.4 2"/><path d="M779.8 742.7 L800.1 784.0" stroke="#525252" stroke-width="2.7"/><path d="M775.2 743.5 L783.6 739.7" stroke="#5a5a5a" stroke-width="4"/><circle cx="682.0" cy="808.4" r="6.9" stroke="#5a5a5a" stroke-width="1.5"/><circle cx="655.3" cy="820.6" r="5.8" stroke="#5a5a5a" stroke-width="1.5"/><circle cx="691.9" cy="826.0" r="6.9" stroke="#5a5a5a" stroke-width="1.5"/><circle cx="664.4" cy="839.0" r="6.1" stroke="#5a5a5a" stroke-width="1.5"/><path d="M640.0 819.1 L653.8 849.7" stroke="#5a5a5a" stroke-width="3.5"/><path d="M640.0 842.8 L652.2 836.7" stroke="#5a5a5a" stroke-width="1.5" stroke-dasharray="3 2"/><path d="M809.6 715.6 L822.6 744.3" stroke="#5a5a5a" stroke-width="3"/><path d="M788.3 674.8 L801.3 699.8" stroke="#5a5a5a" stroke-width="3"/><path d="M887.4 676.7 L901.3 704.4" stroke="#5a5a5a" stroke-width="3"/><path d="M845.4 748.9 L894.8 723.9" stroke="#5a5a5a" stroke-width="2.5"/><path d="M929.1 660.0 L951.7 704.4" stroke="#5a5a5a" stroke-width="2.4"/><path d="M947.6 684.1 L955.0 680.4" stroke="#5a5a5a" stroke-width="4"/><path d="M955.0 687.8 L1010.6 660.0" stroke="#6a6a6a" stroke-width="2.5"/><path d="M980.0 660.0 L988.3 675.7" stroke="#5a5a5a" stroke-width="2"/><path d="M955.0 843.3 L1155.0 741.5" stroke="#6e6e6e" stroke-width="1.8"/><path d="M966.1 840.6 L988.3 829.4" stroke="#5a5a5a" stroke-width="4"/><path d="M1012.4 816.5 L1035.6 805.4" stroke="#5a5a5a" stroke-width="4"/><path d="M1047.6 798.9 L1079.1 783.1" stroke="#5a5a5a" stroke-width="4"/><path d="M1108.7 767.4 L1142.0 750.7" stroke="#5a5a5a" stroke-width="4"/><path d="M977.6 837.8 L984.3 851.7" stroke="#525252" stroke-width="1.7"/><path d="M1025.7 813.7 L1044.3 851.7" stroke="#525252" stroke-width="1.4"/><path d="M1070.2 790.6 L1100.4 851.7" stroke="#525252" stroke-width="1.4"/><path d="M1125.7 760.9 L1155.0 823.0" stroke="#525252" stroke-width="1.7"/><path d="M1073.5 850.7 L1082.8 840.6 L1092.0 845.2" stroke="#8a8a8a" stroke-width="1.2"/></g>
<g shape-rendering="crispEdges"><path d="M421.7 384.6 L409.1 433.7 L455.9 451.3 L473.1 400.0 L431.9 384.6" stroke="#ff0000" stroke-width="1"/><path d="M434.6 395.2 L466.1 406.9 L455.9 439.3 L422.6 428.1 Z" stroke="#ff0000" stroke-width="1"/><path d="M429.1 394.8 L418.9 426.3" stroke="#ff0000" stroke-width="1"/><path d="M405.4 445.4 L439.3 445.4" stroke="#ff0000" stroke-width="1"/><path d="M412.4 450.4 L439.3 450.4 L439.3 465.2" stroke="#ff0000" stroke-width="1"/><path d="M412.4 450.4 L412.4 518.0" stroke="#ff0000" stroke-width="1"/><path d="M430.6 475.6 L426.4 489.4 L430.6 507.5 L441.7 510.3 L463.9 507.5 L469.4 495.0 L466.7 476.9 L441.7 474.2 Z" stroke="#ff0000" stroke-width="1"/><path d="M441.7 479.7 L459.7 479.7 L459.7 504.7 L441.7 504.7 Z" stroke="#ff0000" stroke-width="1"/><path d="M442.5 458.9 L442.5 470.0" stroke="#ff0000" stroke-width="1"/><path d="M408.7 527.8 L458.7 527.8 L418.9 547.6 Z" stroke="#ff0000" stroke-width="1"/><path d="M413.3 530.0 L448.5 530.0 L419.8 543.9 Z" stroke="#ff0000" stroke-width="1"/><path d="M609.1 402.2 L583.7 428.1 L599.1 434.6 L583.7 443.0 L609.1 467.0" stroke="#ff0000" stroke-width="1"/><circle cx="626.3" cy="368.5" r="18.5" stroke="#ff0000" stroke-width="1"/><circle cx="626.3" cy="368.5" r="14.4" stroke="#ff0000" stroke-width="1"/><path d="M664.3 362.4 L729.1 362.4 L729.1 412.4 L664.3 412.4 Z" stroke="#ff0000" stroke-width="1"/><path d="M708.7 362.4 L708.7 415.2" stroke="#ff0000" stroke-width="1"/><path d="M718.9 367.0 L718.9 405.9" stroke="#ff0000" stroke-width="1"/><path d="M621.3 398.5 L621.3 471.7" stroke="#ff0000" stroke-width="1"/><path d="M627.2 401.3 L643.5 401.3 L643.5 469.8 L627.2 469.8 Z" stroke="#ff0000" stroke-width="1"/><path d="M650.4 415.2 L675.4 415.2 L675.4 471.7 L650.4 471.7 Z" stroke="#ff0000" stroke-width="1"/><path d="M686.9 427.2 L712.4 427.2 L712.4 462.4 L686.9 462.4 Z" stroke="#ff0000" stroke-width="1"/><path d="M686.9 427.2 L712.4 462.4" stroke="#ff0000" stroke-width="1"/><path d="M712.4 427.2 L686.9 462.4" stroke="#ff0000" stroke-width="1"/><path d="M708.7 434.6 L708.7 455.9 L691.1 455.9" stroke="#ff0000" stroke-width="1"/><path d="M765.2 455.0 L751.3 465.2 L740.2 467.4 L721.7 468.0" stroke="#ff0000" stroke-width="1"/><path d="M601.3 469.8 L651.3 469.8" stroke="#ff0000" stroke-width="1"/><path d="M677.2 417.0 L721.7 417.0" stroke="#ff0000" stroke-width="1"/><path d="M813.9 285.9 L813.9 321.1" stroke="#ff0000" stroke-width="1"/><path d="M802.8 382.8 L802.8 399.4" stroke="#ff0000" stroke-width="1"/><path d="M802.8 382.8 L818.0 380.0" stroke="#ff0000" stroke-width="1"/><path d="M879.4 343.9 L892.0 343.9" stroke="#ff0000" stroke-width="1"/><path d="M891.1 354.1 L922.6 321.7" stroke="#ff0000" stroke-width="1"/><path d="M887.4 367.0 L1000.4 367.0" stroke="#ff0000" stroke-width="1"/><path d="M890.2 372.6 L999.4 372.6" stroke="#ff0000" stroke-width="1"/><path d="M890.2 388.3 L998.5 388.3" stroke="#ff0000" stroke-width="1"/><path d="M839.3 403.1 L922.6 403.1 L922.6 441.1 L839.3 441.1 Z" stroke="#ff0000" stroke-width="1"/><path d="M856.9 418.9 L902.2 418.9 L909.6 432.2 L853.1 432.2 Z" stroke="#ff0000" stroke-width="1"/><path d="M861.5 423.5 L901.3 423.5" stroke="#ff0000" stroke-width="1"/><path d="M863.3 427.6 L901.3 427.6" stroke="#ff0000" stroke-width="1"/><path d="M839.3 395.7 L839.3 441.1" stroke="#ff0000" stroke-width="1"/><path d="M1022.6 285.9 L1022.6 370.7 L1078.1 480.0 L1144.8 615.2" stroke="#ff0000" stroke-width="1"/><path d="M1018.9 305.9 L1018.9 371.1 L1073.5 480.0 L1116.1 567.0" stroke="#ff0000" stroke-width="1"/><path d="M1010.6 305.9 L1010.6 376.3 L1060.6 480.0 L1103.1 567.0" stroke="#ff0000" stroke-width="1"/><path d="M1010.6 285.9 L1010.6 305.0" stroke="#ff0000" stroke-width="1"/><path d="M1015.2 285.9 L1015.2 305.0" stroke="#ff0000" stroke-width="1"/><path d="M1010.6 395.7 L1050.4 480.0 L1118.9 618.0" stroke="#ff0000" stroke-width="1"/><path d="M1012.4 399.4 L1055.9 487.4 L1108.7 593.0" stroke="#ff0000" stroke-width="1"/><path d="M1109.6 572.6 L1118.0 568.5" stroke="#ff0000" stroke-width="1"/><path d="M1110.6 576.3 L1132.8 620.7 L1144.8 615.2" stroke="#ff0000" stroke-width="1"/><path d="M1105.0 576.3 L1112.4 576.3 L1124.4 618.0" stroke="#ff0000" stroke-width="1"/><path d="M955.9 403.1 L1009.6 403.1 L1009.6 457.8 L955.9 457.8 Z" stroke="#ff0000" stroke-width="1"/><path d="M964.3 419.8 L1000.4 419.8 L1000.4 454.1 L964.3 454.1 Z" stroke="#ff0000" stroke-width="1"/><path d="M968.9 412.4 L999.4 412.4" stroke="#ff0000" stroke-width="1"/><path d="M968.9 415.6 L999.4 415.6" stroke="#ff0000" stroke-width="1"/><path d="M512.4 634.1 L471.7 653.7" stroke="#ff0000" stroke-width="1"/><circle cx="596.1" cy="586.1" r="10.2" stroke="#ff0000" stroke-width="1"/><path d="M608.7 633.3 L671.7 600.4 L718.9 701.7" stroke="#ff0000" stroke-width="1"/><path d="M668.0 604.1 L706.9 703.5" stroke="#ff0000" stroke-width="1"/><path d="M623.5 643.0 L655.0 626.3 L688.3 704.4" stroke="#ff0000" stroke-width="1"/><path d="M608.7 633.3 L662.4 729.4 L718.9 701.7" stroke="#ff0000" stroke-width="1"/><path d="M645.7 684.1 L673.5 671.1 L688.3 704.4 L663.3 717.4 Z" stroke="#ff0000" stroke-width="1"/><path d="M714.3 698.0 L718.9 701.7 L718.0 693.3" stroke="#ff0000" stroke-width="1"/><path d="M555.0 665.2 L573.5 660.6 L579.1 676.3 L575.4 680.0" stroke="#ff0000" stroke-width="1"/><path d="M555.0 643.0 L558.7 645.7 L555.0 652.2" stroke="#ff0000" stroke-width="1"/><path d="M867.4 524.4 L867.4 580.0" stroke="#ff0000" stroke-width="1"/><path d="M875.4 524.4 L875.4 580.0" stroke="#ff0000" stroke-width="1"/><path d="M796.7 653.1 L844.8 626.3 L896.7 725.7 L846.7 752.6 Z" stroke="#ff0000" stroke-width="1"/><path d="M796.7 626.3 L825.4 612.4 L834.6 628.1" stroke="#ff0000" stroke-width="1"/><path d="M796.7 626.3 L807.2 647.6" stroke="#ff0000" stroke-width="1"/><path d="M800.4 633.7 L824.4 622.6" stroke="#ff0000" stroke-width="1"/><path d="M810.6 641.1 L829.1 632.2" stroke="#ff0000" stroke-width="1"/><path d="M851.3 639.3 L870.7 630.4 L882.8 660.6 L866.1 668.0 Z" stroke="#ff0000" stroke-width="1"/><path d="M862.8 637.4 L875.4 662.4" stroke="#ff0000" stroke-width="1"/><path d="M784.6 674.4 L801.3 665.2 L816.1 694.3 L799.4 701.7 Z" stroke="#ff0000" stroke-width="1"/><path d="M793.0 670.7 L805.0 695.2" stroke="#ff0000" stroke-width="1"/><path d="M875.4 680.0 L890.2 672.6 L905.9 701.7 L890.2 709.1 Z" stroke="#ff0000" stroke-width="1"/><path d="M883.7 675.7 L898.5 704.4" stroke="#ff0000" stroke-width="1"/><path d="M920.7 591.1 L993.9 553.1 L1009.6 582.8 L936.5 620.7 Z" stroke="#ff0000" stroke-width="1"/><path d="M926.3 592.0 L992.0 557.4 L1004.6 581.9 L938.3 615.2 Z" stroke="#ff0000" stroke-width="1"/><path d="M923.5 655.9 L1045.7 594.8 L1069.8 644.8" stroke="#ff0000" stroke-width="1"/><path d="M923.5 655.9 L935.6 680.0" stroke="#ff0000" stroke-width="1"/><path d="M930.0 654.1 L1039.3 600.4" stroke="#ff0000" stroke-width="1"/><path d="M935.6 655.0 L1036.5 606.9" stroke="#ff0000" stroke-width="1"/><path d="M970.7 637.4 L1001.3 622.6 L1018.9 647.6 L985.6 665.2 Z" stroke="#ff0000" stroke-width="1"/><path d="M1006.9 619.8 L1036.5 605.9 L1051.3 631.9 L1022.6 647.6 Z" stroke="#ff0000" stroke-width="1"/><path d="M983.7 665.2 L1052.2 631.9" stroke="#ff0000" stroke-width="1"/><path d="M973.5 680.0 L1058.7 637.4" stroke="#ff0000" stroke-width="1"/><path d="M1053.1 602.2 L1084.6 586.9 L1099.4 617.0 L1068.9 632.8 Z" stroke="#ff0000" stroke-width="1"/><path d="M1118.9 618.0 L662.4 853.5" stroke="#ff0000" stroke-width="1"/><path d="M1126.3 626.3 L680.9 854.4" stroke="#ff0000" stroke-width="1"/><path d="M1116.1 626.3 L803.1 783.1" stroke="#ff0000" stroke-width="1"/><path d="M605.9 688.7 L611.5 685.9 L627.6 717.8 L621.3 721.1 Z" stroke="#ff0000" stroke-width="1"/><path d="M457.8 642.8 L465.6 646.7" stroke="#ff0000" stroke-width="1"/><path d="M470.3 651.7 L511.9 632.8 L520.3 635.6" stroke="#ff0000" stroke-width="1"/><path d="M559.2 644.7 L555.0 655.8 L543.9 666.9 L521.7 680.8" stroke="#ff0000" stroke-width="1"/><path d="M573.9 661.7 L579.2 678.1 L565.6 696.7" stroke="#ff0000" stroke-width="1"/><path d="M603.6 721.1 L596.7 710.0 L585.6 701.7 L566.1 700.8" stroke="#ff0000" stroke-width="1"/><path d="M568.9 704.4 L577.2 726.7 L599.4 716.9" stroke="#ff0000" stroke-width="1"/><path d="M525.8 760.0 L571.7 850.3" stroke="#ff0000" stroke-width="1"/><path d="M546.7 790.6 L557.8 786.4 L577.2 779.4" stroke="#ff0000" stroke-width="1"/><path d="M566.1 835.0 L574.4 832.2 L580.0 837.8" stroke="#ff0000" stroke-width="1"/><path d="M611.4 835.8 L731.7 767.2" stroke="#ff0000" stroke-width="1"/><path d="M690.4 795.4 L732.4 773.7" stroke="#ff0000" stroke-width="1"/><path d="M690.4 795.4 L705.7 829.0 L750.0 807.6" stroke="#ff0000" stroke-width="1"/><path d="M700.4 810.7 L740.1 791.1" stroke="#ff0000" stroke-width="1"/><path d="M730.9 768.2 L740.1 763.6" stroke="#ff0000" stroke-width="1"/><path d="M750.8 722.8 L762.2 729.7 L772.9 740.4 L783.6 754.2 L790.5 766.4 L794.3 783.2" stroke="#ff0000" stroke-width="1"/><path d="M743.9 767.9 L753.8 731.3 L763.8 735.8 L774.5 751.1 L782.1 761.8" stroke="#ff0000" stroke-width="1"/><path d="M741.6 769.4 L777.5 752.6" stroke="#ff0000" stroke-width="1"/><path d="M747.0 781.7 L780.6 764.9" stroke="#ff0000" stroke-width="1"/><path d="M783.6 738.1 L805.0 780.1" stroke="#ff0000" stroke-width="1"/><path d="M754.6 806.4 L795.8 785.0" stroke="#ff0000" stroke-width="1"/><path d="M640.0 816.8 L688.9 795.4 L705.7 829.0 L676.7 842.8 L659.9 849.7" stroke="#ff0000" stroke-width="1"/><path d="M643.8 822.9 L656.8 849.7" stroke="#ff0000" stroke-width="1"/><path d="M658.3 810.7 L664.4 818.3 L662.9 827.5 L655.3 825.2" stroke="#ff0000" stroke-width="1"/><path d="M674.4 807.6 L675.9 815.3 L682.0 816.8" stroke="#ff0000" stroke-width="1"/><path d="M662.9 830.6 L695.0 814.5" stroke="#ff0000" stroke-width="1"/><path d="M670.6 827.5 L676.7 842.8" stroke="#ff0000" stroke-width="1"/><path d="M681.3 816.8 L687.4 834.4" stroke="#ff0000" stroke-width="1"/><path d="M805.9 714.6 L824.4 706.3 L838.3 737.8 L820.7 746.1 Z" stroke="#ff0000" stroke-width="1"/><path d="M813.3 711.9 L826.3 741.5" stroke="#ff0000" stroke-width="1"/><path d="M803.1 660.0 L846.7 752.6" stroke="#ff0000" stroke-width="1"/><path d="M864.3 660.0 L896.7 725.7" stroke="#ff0000" stroke-width="1"/><path d="M843.9 745.6 L893.0 721.1" stroke="#ff0000" stroke-width="1"/><path d="M871.7 680.4 L892.0 672.0" stroke="#ff0000" stroke-width="1"/><path d="M925.4 660.0 L949.4 706.3" stroke="#ff0000" stroke-width="1"/><path d="M932.8 660.0 L954.1 703.0" stroke="#ff0000" stroke-width="1"/><path d="M940.2 660.0 L955.0 687.8" stroke="#ff0000" stroke-width="1"/><path d="M955.0 678.5 L992.0 660.0" stroke="#ff0000" stroke-width="1"/><path d="M955.0 695.2 L1025.4 660.0" stroke="#ff0000" stroke-width="1"/><path d="M977.2 660.0 L987.4 676.7" stroke="#ff0000" stroke-width="1"/><path d="M1099.4 807.2 L1106.4 803.1 L1118.9 805.8 L1124.4 796.1 L1134.2 812.8 L1128.6 816.9 L1132.8 830.8 L1123.1 837.8 L1117.5 826.7 L1109.2 828.1 L1099.4 807.2" stroke="#ff0000" stroke-width="1"/></g>
<g font-family="Liberation Sans, sans-serif" stroke="none"><text x="468.3" y="443.9" font-size="7.7" fill="#333333" transform="rotate(90 468.3 443.9)" text-anchor="middle" font-weight="bold">DEN</text><text x="646.1" y="330.9" font-size="7.7" fill="#333333" transform="rotate(90 646.1 330.9)" text-anchor="middle" font-weight="bold">LAUNDRY</text><text x="625.9" y="368.5" font-size="6.5" fill="#333333" transform="rotate(90 625.9 368.5)" text-anchor="middle" font-weight="bold">HW</text><text x="686.9" y="385.6" font-size="8" fill="#333333" transform="rotate(90 686.9 385.6)" text-anchor="middle" font-weight="bold">W/D</text><text x="870.2" y="552.2" font-size="7.7" fill="#333333" transform="rotate(90 870.2 552.2)" text-anchor="middle" font-weight="bold">LIVING ROOM</text><text x="616.5" y="704.1" font-size="7.6" fill="#333333" transform="rotate(63 616.5 704.1)" text-anchor="middle" font-weight="bold">KITCHEN</text><text x="1115.6" y="823.3" font-size="31" fill="#4c4c4c" transform="rotate(-27 1115.6 823.3)" text-anchor="middle">B1</text><text x="1125.8" y="830.8" font-size="6" fill="#333333" transform="rotate(-27 1125.8 830.8)" text-anchor="middle" font-weight="bold">BR</text></g>
</g>
<path d="M323.5 884 V250.5 H1257.5 V836" fill="none" stroke="#ff0000" stroke-width="1"/>
<path d="M323 884.5 H1306" fill="none" stroke="#ff0000" stroke-width="1"/>
<path d="M1257.5 836 V914" fill="none" stroke="#00ff00" stroke-width="1"/>
<g fill="none" stroke="#fff" stroke-width="1"><rect x="301.5" y="894.5" width="12" height="12"/><path d="M307.5 894 V814 M301.5 900.5 H313.5 M307.5 894.5 V906.5 M313.5 900.5 H393 M302 825 L307.5 814 L313 825 M383 895 L394 900.5 L383 906 M300 794 L307.5 803 L315 794 M307.5 803 V811 M399 893 L413 907 M413 893 L399 907"/></g>
<rect x="1289.500" y="895.500" width="55" height="20" fill="#0078d7" stroke="#fff" stroke-width="1"/><rect x="1290" y="896" width="2" height="18" fill="#fff"/><rect x="1342" y="896" width="3" height="18" fill="#fff"/>
<rect x="1352" y="895" width="50" height="20" fill="#a0a0a0"/>
<text x="1293" y="909" font-family="DejaVu Sans, Liberation Sans, sans-serif" font-size="12.5" fill="#fff" textLength="48">11.9291</text>
<text x="1355" y="909" font-family="DejaVu Sans, Liberation Sans, sans-serif" font-size="12.5" fill="#000" textLength="43">0.2052</text>
</svg>
</div>

<!-- ================= MODEL TABS ================= -->
<div id="mtabs" class="a">
  <div class="a" style="left:0;top:16px;width:1484px;height:3px;background:#fafafa"></div>
  <svg style="left:0;top:0" width="230" height="19" viewBox="0 0 230 19">
    <path d="M126.500 0 H192.500 L188 12.500 Q187 15.500 184 15.500 H135 Q132 15.500 131 12.500 Z" fill="#c8c8c8" stroke="#1e1e1e" stroke-width="1"/>
    <path d="M60.500 0 H126.500 L122 12.500 Q121 15.500 118 15.500 H69 Q66 15.500 65 12.500 Z" fill="#c8c8c8" stroke="#1e1e1e" stroke-width="1"/>
    <path d="M-1 0 H60 L55.500 12.500 Q54.500 15.500 51.500 15.500 H8 Q5 15.500 4 12.500 Z" fill="#fff" stroke="#1e1e1e" stroke-width="1"/>
    <rect x="-1" y="-1" width="232" height="1.500" fill="#fff" opacity="0"/>
    <rect x="200.500" y="2" width="20" height="12" fill="#e4e4e4" stroke="#b0b0b0" stroke-width="1"/>
    <path d="M210.500 4.500 v7.500 M206.700 8.200 h7.600" stroke="#333" stroke-width="1.100"/>
  </svg>
  <span class="t" style="left:12px;top:2px;font-weight:bold;letter-spacing:0.166px">Model</span>
  <span class="t" style="left:75px;top:2px;letter-spacing:-0.341px">Sheet1</span>
  <span class="t" style="left:141px;top:2px;letter-spacing:-0.341px">Sheet2</span>
</div>


<!-- ================= COMMAND WINDOW ================= -->
<div id="cmdhead" class="a"><span class="t" style="left:4px;top:5px;font-weight:bold;font-size:13px;letter-spacing:-0.277px">Command Window</span>
  <svg style="left:1878px;top:4px" width="40" height="14" viewBox="1878 939 40 14">
    <path d="M1884.500 941.500 h4.500 v4.500 h-1.500 M1882.500 943.500 h4.700 v4.700 h-4.700 z" fill="none" stroke="#1a1a1a" stroke-width="1.300"/>
    <path d="M1904 942 l7 7 M1911 942 l-7 7" stroke="#1a1a1a" stroke-width="1.500"/>
  </svg>
</div>
<div id="cmdlog" class="a">
  <span class="cl" style="top:3px;left:4px;letter-spacing:-0.191px">: TRACEIMAGE</span>
  <span class="cl" style="top:19px;left:4px;letter-spacing:0.455px">Default:</span><span class="cl or" style="top:19px;left:53px;letter-spacing:0.919px">(0.0000,0.0000,0.0000)</span>
  <span class="cl" style="top:35px;left:4px;font-weight:bold;letter-spacing:0.077px">Start rectangular area»</span>
  <div class="a" style="left:1902px;top:0;width:17px;height:55px;background:#f0f0f0"></div>
  <div class="a" style="left:1903px;top:29px;width:14px;height:9px;background:#cdcdcd"></div>
  <svg style="left:1901.500px;top:0" width="16" height="55" viewBox="0 0 16 55">
    <polygon points="3.500,11 12.500,11 8,6.500" fill="#111"/><polygon points="3.500,44.500 12.500,44.500 8,49" fill="#111"/>
  </svg>
</div>
<div id="cmdsep" class="a"></div>
<div id="cmdin" class="a">
  <span class="cl" style="top:0px;left:4px;letter-spacing:0.455px">Default:</span><span class="cl or" style="top:0px;left:53px;letter-spacing:0.919px">(0.0000,0.0000,0.0000)</span>
  <span class="cl" style="top:16px;left:4px;font-weight:bold;letter-spacing:-0.031px">Finish rectangular area»</span>
</div>


<!-- ================= STATUS BAR ================= -->
<div id="status" class="a">
  <span class="t" style="left:2px;top:11px;font-size:12px;color:#1e1e1e;letter-spacing:-0.089px">T1= 25 D1= 0.40 T2= 22 D2= 1.00</span>
  <div class="sb" style="left:670px"></div>
  <div class="sb" style="left:703px"></div>
  <div class="sb" style="left:737px"></div>
  <div class="sb" style="left:770px"></div>
  <div class="sb" style="left:805px"></div>
  <div class="sb on" style="left:838px"></div>
  <div class="sb" style="left:871px"></div>
  <div class="sb on" style="left:904px"></div>
  <div class="sb on" style="left:937px"></div>
  <div class="sb on" style="left:970px"></div>
  <div class="sb" style="left:1003px;width:82px;top:6px;height:22px"><span class="t" style="left:5px;top:3px;color:#1e1e1e;letter-spacing:-0.533px">Dynamic CCS</span></div>
  <div class="sb" style="left:1093px;width:24px;top:6px;height:22px"><svg style="left:5px;top:4px" width="13" height="13" viewBox="0 0 13 13"><path d="M6.500 0 V13 M0 6.500 H13" stroke="#111" stroke-width="1.800"/></svg></div>
  <div class="sb" style="left:1128px;width:94px;top:6px;height:22px"><span class="t" style="left:4px;top:3px;color:#1e1e1e">Annotation</span><svg style="left:74px;top:7px" width="12" height="8" viewBox="0 0 12 8"><polygon points="0,0 12,0 6,7" fill="#111"/></svg></div>
  <span class="t" style="left:1229px;top:10px;color:#1e1e1e;letter-spacing:-.2px">(1:1)</span>
  <span class="t" style="left:1259px;top:10px;color:#1e1e1e;letter-spacing:-.3px">(0.1975,8.1686,0.0000)</span>
  <!-- icons -->
  <svg style="left:660px;top:0" width="340" height="32" viewBox="660 1046 340 32">
    <!-- 1 bolt/nut -->
    <path d="M677 1056 h8 v3 h-2 v7 h-4 v-7 h-2 z" fill="#6b7178"/><ellipse cx="687.500" cy="1067.500" rx="4" ry="2.500" fill="#e4b000" stroke="#7a6200" stroke-width=".800"/>
    <!-- 2 snap grid with cursor -->
    <path d="M708 1056 v16 M713 1056 v16 M718 1056 v16 M723 1056 v16 M706 1059 h20 M706 1064 h20 M706 1069 h20" stroke="#9fb6c4" stroke-width=".800"/>
    <circle cx="711" cy="1059" r="2" fill="#e0242a"/>
    <path d="M713.500 1061 v11.500 l3 -2.800 l2.200 4.300 l1.800 -1 l-2.200 -4.200 h4z" fill="#fff" stroke="#111" stroke-width="1.100"/>
    <!-- 3 grid -->
    <path d="M742 1055.500 v17 M747.500 1055.500 v17 M753 1055.500 v17 M758 1055.500 v17 M740 1058.300 h20 M740 1062.600 h20 M740 1067 h20 M740 1071.200 h20" stroke="#111" stroke-width="1.400"/>
    <!-- 4 ortho -->
    <path d="M776.500 1059 l11 -3 v15 l-11 -3 z" fill="none" stroke="#111" stroke-width="1.300"/><path d="M773 1063.500 h18" stroke="#111" stroke-width="1" stroke-dasharray="4 1.500 1 1.500"/>
    <!-- 5 polar -->
    <circle cx="814.500" cy="1064" r="6.200" fill="none" stroke="#111" stroke-width="1.300"/><path d="M814.500 1064 l6 -7.500 M814.500 1064 h12 M814.500 1064 l6 7.500" stroke="#2a8fdc" stroke-width="1" stroke-dasharray="3 1.500"/><path d="M814.500 1064 l-3 -3" stroke="#111" stroke-width="1"/>
    <!-- 6 esnap -->
    <text x="842" y="1064" font-family="Liberation Sans, sans-serif" font-size="8.500" fill="#1b86de">E</text>
    <path d="M849.500 1058.500 v11.500 l3 -2.800 l2.200 4.300 l1.800 -1 l-2.200 -4.200 h4z" fill="#fff" stroke="#111" stroke-width="1.100"/>
    <path d="M843 1073 h14 M859.500 1057 v10" stroke="#111" stroke-width="1" stroke-dasharray="2.500 1.500"/><circle cx="858.500" cy="1073" r="2" fill="#e0242a"/>
    <!-- 7 etrack -->
    <text x="875" y="1064" font-family="Liberation Sans, sans-serif" font-size="8.500" fill="#1b86de">E</text>
    <path d="M883 1060 h7 M881.500 1063.500 h10 M880 1067 h13 M878 1070.500 h17" stroke="#111" stroke-width="1.300"/>
    <!-- 8 quick input -->
    <path d="M910 1057.500 h9 l5 5 v9 h-14 z" fill="none" stroke="#111" stroke-width="1.300"/><rect x="907.500" y="1054.500" width="19" height="19" rx="2" fill="none" stroke="#111" stroke-width="1.200" stroke-dasharray="3 2"/>
    <!-- 9 -->
    <rect x="944.500" y="1061.500" width="11" height="11" fill="#fff" stroke="#111" stroke-width="1.200"/><rect x="947" y="1053.500" width="6" height="3" fill="#1b86de"/><rect x="940" y="1063" width="3" height="6" fill="#1b86de"/><path d="M944.500 1059 v-3.500 M955.500 1059 v-3.500 M955.500 1057 h-2" stroke="#1b86de" stroke-width="1" stroke-dasharray="2 1.500"/>
    <!-- 10 -->
    <rect x="976.500" y="1058.500" width="9" height="9" fill="#6b7178" stroke="#111" stroke-width="1.200"/><rect x="980.500" y="1062.500" width="9" height="9" fill="#1b86de" stroke="#111" stroke-width="1.200"/>
  </svg>
</div>
<!-- taskbar peek -->
<div class="a" style="left:0;top:1078px;width:1920px;height:2px;background:#404040"></div>
<div class="a" style="left:48px;top:1078px;width:288px;height:2px;background:#f0f0f0;border-top:1px solid #bdbdbd"></div>


<!-- ================= RIGHT DOCK ================= -->
<div id="dock" class="a"></div>
<div id="docktitle" class="a">
  <svg style="left:3px;top:3px" width="16" height="45" viewBox="1880 167 16 45">
    <path d="M1881.500 169.500 l7 7 M1888.500 169.500 l-7 7" stroke="#111" stroke-width="1.500"/>
    <path d="M1881 192 h8.500 v1.800 h-1.800 v5.500 l2.200 2.500 v1 h-9.300 v-1 l2.200 -2.500 v-5.500 h-1.800 z" fill="#222"/>
    <path d="M1885.200 202.800 v5.500" stroke="#222" stroke-width="1.200"/>
  </svg>
  <span class="vt" style="left:1px;top:739px;font-weight:bold;font-size:13px;letter-spacing:-0.050px">Image Tracer Properties</span>
</div>
<div id="sidetabs" class="a">
  <div class="a" style="left:0;top:485px;width:22px;height:157px;background:#fff"></div>
  <div class="a" style="left:2px;top:77px;width:20px;height:1px;background:#dcdcdc"></div>
  <div class="a" style="left:2px;top:160px;width:20px;height:1px;background:#dcdcdc"></div>
  <div class="a" style="left:2px;top:286px;width:20px;height:1px;background:#dcdcdc"></div>
  <div class="a" style="left:2px;top:370px;width:20px;height:1px;background:#dcdcdc"></div>
  <div class="a" style="left:2px;top:484px;width:20px;height:1px;background:#dcdcdc"></div>
  <span class="vt" style="left:3px;top:67px;letter-spacing:-0.170px">Properties</span>
  <span class="vt" style="left:3px;top:151px;letter-spacing:-0.336px">HomeByMe</span>
  <span class="vt" style="left:3px;top:277px;letter-spacing:0.153px">Sheet Set Manager</span>
  <span class="vt" style="left:3px;top:358px;letter-spacing:-0.438px">References</span>
  <span class="vt" style="left:3px;top:477px;letter-spacing:-0.315px">Design Resources</span>
  <span class="vt" style="left:3px;top:630px;letter-spacing:-0.031px">Image Tracer Properties</span>
</div>

<!-- tabs -->
<div class="a" style="left:1558px;top:183px;width:75px;height:21px;background:#f2f2f2;border:1px solid #dcdcdc"></div>
<div class="a" style="left:1507px;top:181px;width:51px;height:23px;background:#3ffcfc"></div>
<span class="pt" style="left:1518px;top:186px;letter-spacing:-0.269px">Basic</span>
<span class="pt" style="left:1570px;top:187px;letter-spacing:-0.172px">Advanced</span>
<!-- help button -->
<div class="a" style="left:1831px;top:181px;width:20px;height:20px;border-radius:3px;border:1px solid #3a66a8;background:linear-gradient(#86aede,#3f76c0 55%,#5a94d8)"><span class="t" style="left:5px;top:2px;font-weight:bold;font-size:14px;color:#fff;line-height:15px">?</span></div>
<!-- scroll frame -->
<div class="a" style="left:1507px;top:203px;width:346px;height:652px;border:1px solid #d0d0d0;border-top-color:#c4c4c4"></div>
<div class="a" style="left:1509px;top:204px;width:325px;height:174px;background:#ffff80"></div>
<!-- scrollbar -->
<div class="a" style="left:1835px;top:204px;width:17px;height:650px;background:#f3f3f3;border-left:1px solid #fafafa"></div>
<div class="a" style="left:1837px;top:221px;width:14px;height:508px;background:#cdcdcd"></div>
<svg class="a" style="left:1836px;top:204px" width="16" height="650" viewBox="0 0 16 650"><polygon points="3.500,11 12.500,11 8,6.500" fill="#111"/><polygon points="3,619.500 12,619.500 7.500,624" fill="#111"/></svg>
<!-- instructions -->
<span class="pt bl" style="left:1539px;top:210px">1.</span><span class="pt bl" style="left:1553px;top:210px;letter-spacing:-0.176px">Please disable ESNAP's by selecting the F3 button</span>
<span class="pt bl" style="left:1553px;top:225px;letter-spacing:-0.033px">on your keyboard.</span>
<span class="pt bl" style="left:1539px;top:240px">2.</span><span class="pt bl" style="left:1553px;top:240px;letter-spacing:0.043px">Box-select the entire image or portion of the image</span>
<span class="pt bl" style="left:1553px;top:255px;letter-spacing:0.048px">you would like to convert.</span>
<span class="pt bl" style="left:1539px;top:270px">3.</span><span class="pt bl" style="left:1553px;top:270px;letter-spacing:-0.041px">If necessary:</span>
<span class="pt bl" style="left:1579px;top:285px">a.</span><span class="pt bl" style="left:1593px;top:285px;letter-spacing:0.056px">Select a different image type from the drop</span>
<span class="pt bl" style="left:1593px;top:300px;letter-spacing:0.062px">down list in the Image Profile type group</span>
<span class="pt bl" style="left:1593px;top:315px;letter-spacing:-0.247px">box.</span>
<span class="pt bl" style="left:1579px;top:330px">b.</span><span class="pt bl" style="left:1593px;top:330px;letter-spacing:0.022px">Adjust the settings to achieve the best</span>
<span class="pt bl" style="left:1593px;top:345px;letter-spacing:-0.098px">result.</span>
<span class="pt bl" style="left:1539px;top:360px">4.</span><span class="pt bl" style="left:1553px;top:360px;letter-spacing:-0.077px">Select Ok to complete a command.</span>

<!-- section 1 -->
<div class="hd" style="top:385px"><b style="letter-spacing:-0.038px">Image profile type to convert</b><i></i></div>
<div class="a" style="left:1550px;top:409px;width:274px;height:19px;background:#fff;border:1px solid #adadad"><span class="pt" style="left:2px;top:2px;letter-spacing:-0.080px">FloorPlan High Quality, High-Res Image</span>
  <div class="a" style="right:0;top:0;width:16px;height:17px;background:#e3e3e3;border:1px solid #b9b9b9"><svg style="left:2px;top:5px" width="10" height="6" viewBox="0 0 10 6"><path d="M1 .800 L5 4.800 L9 .800" fill="none" stroke="#444" stroke-width="1.100"/></svg></div></div>
<div class="pbtn" style="left:1550px;top:434px;width:100px;height:22px"></div>
<span class="pt" style="left:1582px;top:439px;letter-spacing:-0.172px">Load...</span>
<div class="sep" style="top:459px"></div>

<!-- section 2 -->
<div class="hd" style="top:466px"><b style="letter-spacing:-0.234px">Geometry options</b><i></i></div>
<div class="radio" style="left:1549px;top:500px"></div><span class="pt" style="left:1568px;top:500px;letter-spacing:-0.237px">Lines</span>
<div class="radio" style="left:1689px;top:500px"><div class="a" style="left:2.500px;top:2.500px;width:4px;height:4px;border-radius:50%;background:#111"></div></div><span class="pt" style="left:1708px;top:500px;letter-spacing:-0.281px">Polylines</span>
<div class="radio" style="left:1549px;top:526px"></div><span class="pt" style="left:1572px;top:528px;letter-spacing:-0.034px">Fitted polylines</span>
<div class="radio" style="left:1689px;top:526px"></div><span class="pt" style="left:1708px;top:526px;letter-spacing:-0.266px">Splines</span>
<div class="sep" style="top:553px"></div>

<!-- section 3 -->
<div class="hd" style="top:560px"><b style="letter-spacing:-0.203px">View options</b><i></i></div>
<span class="pt" style="left:1550px;top:589px;letter-spacing:-0.097px">Transparency:</span>
<div class="groove" style="left:1550px;top:629px;width:216px"></div>
<svg class="a" style="left:1540px;top:618px" width="240" height="32" viewBox="1540 618 240 32">
  <path d="M1591 622.500 h11 v12 l-5.500 6 l-5.500 -6 z" fill="#0078d7"/>
  <path d="M1555.500 642 v4.500 M1575.900 642 v4.500 M1596.300 642 v4.500 M1616.800 642 v4.500 M1637.200 642 v4.500 M1657.600 642 v4.500 M1678 642 v4.500 M1698.500 642 v4.500 M1718.900 642 v4.500 M1739.300 642 v4.500 M1759.700 642 v4.500" stroke="#a0a0a0" stroke-width="1"/>
</svg>
<div class="spin" style="left:1771px;top:624px"><span class="pt" style="left:3px;top:4px">20</span><svg style="left:39px;top:3px" width="10" height="16" viewBox="0 0 10 16"><polygon points="2,5.500 8,5.500 5,2.500" fill="#111"/><polygon points="2,11 8,11 5,14" fill="#111"/></svg></div>
<div class="chk" style="left:1550px;top:669px"></div><span class="pt" style="left:1572px;top:669px;letter-spacing:-0.120px">Hide image</span>
<div class="chk" style="left:1550px;top:698px"></div><span class="pt" style="left:1572px;top:698px;letter-spacing:-0.072px">Disable dynamic update</span>
<div class="sep" style="top:720px"></div>

<!-- section 4 -->
<div class="hd" style="top:727px"><b style="letter-spacing:-0.048px">Image options</b><i></i></div>
<span class="pt" style="left:1550px;top:751px;letter-spacing:-0.094px">Brightness:</span>
<div class="groove" style="left:1550px;top:787px;width:216px"></div>
<svg class="a" style="left:1540px;top:776px" width="240" height="32" viewBox="1540 776 240 32">
  <path d="M1652 780 h11 v12 l-5.500 6 l-5.500 -6 z" fill="#0078d7"/>
  <path d="M1555.500 800 v4.500 M1575.900 800 v4.500 M1596.300 800 v4.500 M1616.800 800 v4.500 M1637.200 800 v4.500 M1657.600 800 v4.500 M1678 800 v4.500 M1698.500 800 v4.500 M1718.900 800 v4.500 M1739.300 800 v4.500 M1759.700 800 v4.500" stroke="#a0a0a0" stroke-width="1"/>
</svg>
<div class="spin" style="left:1771px;top:782px"><span class="pt" style="left:3px;top:4px">50</span><svg style="left:39px;top:3px" width="10" height="16" viewBox="0 0 10 16"><polygon points="2,5.500 8,5.500 5,2.500" fill="#111"/><polygon points="2,11 8,11 5,14" fill="#111"/></svg></div>
<span class="pt" style="left:1550px;top:822px;letter-spacing:-0.076px">Contrast:</span>

<!-- progress + buttons -->
<div class="a" style="left:1507px;top:862px;width:347px;height:20px;background:#e6e6e6;border:1px solid #bcbcbc"></div>
<span class="pt" style="left:1671px;top:866px">0%</span>
<div class="pbtn" style="left:1617px;top:889px"></div>
<div class="pbtn" style="left:1698px;top:889px"></div>
<div class="pbtn" style="left:1779px;top:889px"></div>
<svg class="a" style="left:1617px;top:889px" width="240" height="22" viewBox="1617 889 240 22">
  <path d="M1636.500 900.500 l3.800 4 l9.200 -10" fill="none" stroke="#8e8e8e" stroke-width="2.600"/>
  <path d="M1709 893.500 l12 12.500 M1721 893.500 l-12 12.500" stroke="#ee1111" stroke-width="2.400"/>
  <path d="M1788.500 893 h12 l3 3 v11.500 h-15 z" fill="#2a8fdc" stroke="#1c5f9c" stroke-width="1"/>
  <rect x="1791.500" y="893.500" width="8" height="4.500" fill="#8fa1ad"/><rect x="1791" y="901" width="10" height="6" fill="#fff"/>
</svg>
<span class="pt" style="left:1659px;top:894px;color:#8a8a8a;letter-spacing:-0.422px">Ok</span>
<span class="pt" style="left:1727px;top:894px;letter-spacing:-0.393px">Cancel</span>
<span class="pt" style="left:1809px;top:894px;letter-spacing:-0.194px">Save...</span>


</body>
</html>
